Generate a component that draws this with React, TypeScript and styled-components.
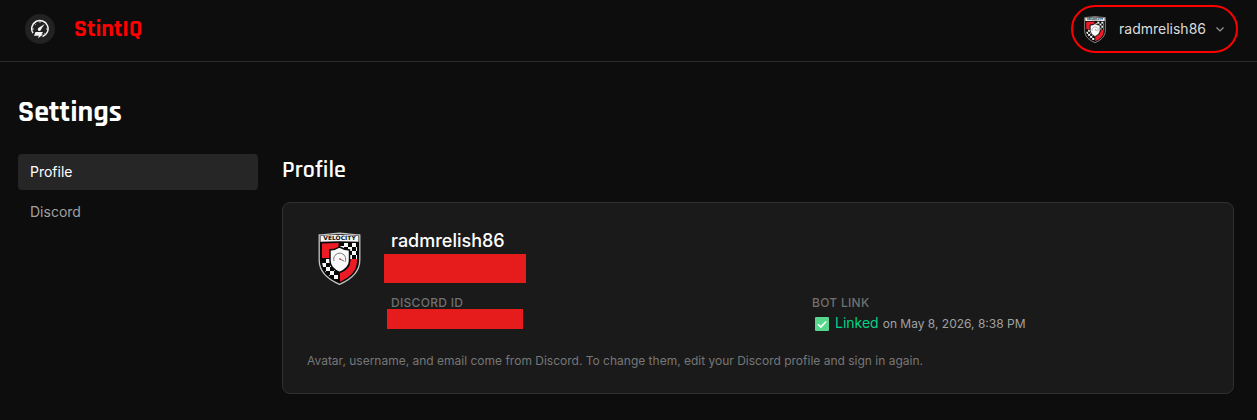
import React from "react";
import styled, { createGlobalStyle } from "styled-components";

const GlobalStyle = createGlobalStyle`
  *, *::before, *::after { box-sizing: border-box; }
  body {
    margin: 0;
    background: #0d0d0d;
    color: #fff;
    font-family: Inter, "Liberation Sans", sans-serif;
    font-size: 14px;
    line-height: 20px;
  }
  h1, h2, h3, p, dl, dd { margin: 0; }
`;

const display = `Rajdhani, Roboto, "Liberation Sans", sans-serif`;

const Header = styled.header`
  display: flex;
  align-items: center;
  justify-content: space-between;
  padding: 5px 19px 8px 25px;
  border-bottom: 1px solid #2a2a2a;
`;

const Brand = styled.a`
  display: flex;
  align-items: center;
  gap: 19px;
  color: #ff0000;
  font-family: ${display};
  font-size: 24px;
  font-weight: 700;
  line-height: 30px;
  text-decoration: none;
`;

const BrandMark = styled.span`
  display: grid;
  place-items: center;
  width: 30px;
  height: 30px;
  border-radius: 50%;
  background: #222;
`;

const UserButton = styled.button`
  display: flex;
  align-items: center;
  height: 48px;
  padding: 0 10px 0 11px;
  border: 2px solid #ff0000;
  border-radius: 24px;
  background: transparent;
  color: #dcdcdc;
  font: 400 14px/20px Inter, "Liberation Sans", sans-serif;
  cursor: pointer;
`;

const UserName = styled.span`
  margin: 0 8px 0 13px;
`;

const Main = styled.main`
  padding: 32px 23px 24px 18px;
`;

const PageTitle = styled.h1`
  font-family: ${display};
  font-size: 30px;
  font-weight: 700;
  line-height: 36px;
`;

const Columns = styled.div`
  display: grid;
  grid-template-columns: 240px minmax(0, 1fr);
  gap: 24px;
  margin-top: 24px;
`;

const SideNav = styled.nav`
  display: flex;
  flex-direction: column;
  gap: 4px;
`;

const NavLink = styled.a<{ $active?: boolean }>`
  padding: 8px 12px;
  border-radius: 4px;
  background: ${(p) => (p.$active ? "#262626" : "transparent")};
  color: ${(p) => (p.$active ? "#fff" : "#a0a0a0")};
  text-decoration: none;
`;

const SectionTitle = styled.h2`
  font-family: ${display};
  font-size: 24px;
  font-weight: 600;
  line-height: 32px;
`;

const Card = styled.div`
  margin-top: 16px;
  padding: 24px 24px 22px;
  border: 1px solid #303030;
  border-radius: 8px;
  background: #1a1a1a;
`;

const Identity = styled.div`
  display: grid;
  grid-template-columns: 64px minmax(0, 1fr);
  gap: 20px;
`;

const AvatarBox = styled.div`
  display: flex;
  justify-content: center;
  padding-top: 5px;
`;

const DisplayName = styled.h3`
  font-size: 18px;
  font-weight: 500;
  line-height: 27px;
`;

const Redaction = styled.div<{ $width: number; $height: number; $outset: number }>`
  width: ${(p) => p.$width}px;
  height: ${(p) => p.$height}px;
  margin-left: -${(p) => p.$outset}px;
  background: #e61c1c;
`;

const Details = styled.dl`
  display: grid;
  grid-template-columns: 1fr 1fr;
  gap: 24px;
  margin-top: 12px;
`;

const Term = styled.dt`
  margin-bottom: -2px;
  color: #707070;
  font-size: 12px;
  font-weight: 500;
  line-height: 16px;
  letter-spacing: 0.025em;
`;

const LinkStatus = styled.dd`
  display: flex;
  align-items: baseline;
  padding: 4px 0 0 3px;
`;

const Linked = styled.span`
  margin: 0 4px 0 6px;
  color: #00d488;
`;

const LinkedAt = styled.span`
  color: #a0a0a0;
  font-size: 12px;
`;

const Tick = styled.svg`
  align-self: center;
`;

const Note = styled.p`
  margin-top: 17px;
  color: #777;
  font-size: 12px;
`;

const checks = [
  [26, 11], [34, 11], [22, 14], [30, 15], [38, 15], [26, 19], [34, 19], [30, 23], [38, 23],
  [8, 27], [4, 31], [12, 31], [8, 35], [16, 35], [4, 39], [12, 39], [16, 43], [8, 43],
];

function Shield({ width, height, id }: { width: number; height: number; id: string }) {
  return (
    <svg width={width} height={height} viewBox="0 0 43 53" aria-hidden="true">
      <defs>
        <clipPath id={id}>
          <path d="M4 10.500H39V28C39 38 34 44 21.500 50C9 44 4 38 4 28Z" />
        </clipPath>
      </defs>
      <path
        d="M1.200 3C7 2.500 15 2 21.500 1.200C28 2 36 2.500 41.800 3V28C41.800 40 34 47 21.500 52.300C9 47 1.200 40 1.200 28Z"
        fill="#080808"
        stroke="#c4c4c4"
        strokeWidth="1.300"
      />
      <path d="M2.500 4Q21.500 1.500 40.500 4V9.800Q21.500 8.500 2.500 9.800Z" fill="#f5f5f5" />
      <text
        x="21.500"
        y="8.300"
        textAnchor="middle"
        fontFamily="DejaVu Sans, sans-serif"
        fontSize="6"
        fontWeight="700"
        fill="#111"
      >
        VELOCITY
      </text>
      <g clipPath={`url(#${id})`}>
        <path d="M4 11.500Q13 11 20.500 11V15.500Q16 17 11.500 17V26H4Z" fill="#ee1b24" />
        <path d="M39 27H32.500C32.500 35 29 38 22 41V51H39Z" fill="#ee1b24" />
        {checks.map(([x, y]) => (
          <rect key={`${x}-${y}`} x={x} y={y} width="4" height="4" fill="#f7f7f7" />
        ))}
      </g>
      <path
        d="M21.500 15Q27 18 31.500 18V29Q31.500 36 21.500 40.500Q12 36 12 29V18Q17 18 21.500 15Z"
        fill="#fafafa"
        stroke="#080808"
        strokeWidth="1.500"
      />
      <path d="M16 29A6 6 0 1 1 27 30M21.500 27L26 29" fill="none" stroke="#666" strokeWidth=".9" />
      <circle cx="22" cy="27" r=".8" fill="#d22" />
    </svg>
  );
}

function GaugeLogo() {
  return (
    <svg width="20" height="20" viewBox="0 0 20 20" fill="none" aria-hidden="true">
      <path
        d="M3 14.200A8.200 8.200 0 1 1 12.500 17.500"
        stroke="#f5f5f5"
        strokeWidth="1.500"
      />
      <path
        d="M10 2v2M4.400 4.400l1.300 1.300M2 10h2M16 10h2M15.600 15.600l-1.300-1.300"
        stroke="#f5f5f5"
        strokeWidth=".8"
      />
      <path d="M14.600 5L11 10.400A1.600 1.600 0 1 1 8.800 8.800Z" fill="#f5f5f5" />
      <path d="M5.500 13H13L11.600 15.500H13L8 19.200L8.800 16.800H4Z" fill="#f5f5f5" />
    </svg>
  );
}

export default function App() {
  return (
    <>
      <GlobalStyle />
      <Header>
        <Brand href="#">
          <BrandMark>
            <GaugeLogo />
          </BrandMark>
          StintIQ
        </Brand>
        <UserButton type="button" aria-haspopup="menu">
          <Shield width={22} height={27} id="shield-small" />
          <UserName>radmrelish86</UserName>
          <svg width="12" height="12" viewBox="0 0 12 12" fill="none" aria-hidden="true">
            <path d="M2.500 4.500L6 8L9.500 4.500" stroke="#999" strokeWidth="1.200" />
          </svg>
        </UserButton>
      </Header>
      <Main>
        <PageTitle>Settings</PageTitle>
        <Columns>
          <SideNav aria-label="Settings">
            <NavLink href="#profile" $active aria-current="page">
              Profile
            </NavLink>
            <NavLink href="#discord">Discord</NavLink>
          </SideNav>
          <section id="profile">
            <SectionTitle>Profile</SectionTitle>
            <Card>
              <Identity>
                <AvatarBox>
                  <Shield width={43} height={53} id="shield-large" />
                </AvatarBox>
                <div>
                  <DisplayName>radmrelish86</DisplayName>
                  <Redaction $width={142} $height={29} $outset={7} />
                  <Details>
                    <div>
                      <Term>DISCORD ID</Term>
                      <dd>
                        <Redaction $width={136} $height={20} $outset={4} />
                      </dd>
                    </div>
                    <div>
                      <Term>BOT LINK</Term>
                      <LinkStatus>
                        <Tick width="14" height="14" viewBox="0 0 14 14" aria-hidden="true">
                          <rect width="14" height="14" rx="1" fill="#58d68d" />
                          <path
                            d="M3 7.200L5.800 10L11.200 4.500"
                            fill="none"
                            stroke="#fff"
                            strokeWidth="1.600"
                          />
                        </Tick>
                        <Linked>Linked</Linked>
                        <LinkedAt>on May 8, 2026, 8:38 PM</LinkedAt>
                      </LinkStatus>
                    </div>
                  </Details>
                </div>
              </Identity>
              <Note>
                Avatar, username, and email come from Discord. To change them, edit your Discord
                profile and sign in again.
              </Note>
            </Card>
          </section>
        </Columns>
      </Main>
    </>
  );
}
